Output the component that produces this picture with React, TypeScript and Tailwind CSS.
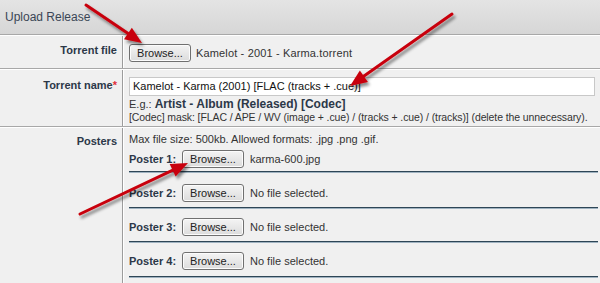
import React from 'react';

type Pt = [number, number];

// red annotation arrows drawn over the form
const arrows: { from: Pt; to: Pt }[] = [
  { from: [86, 5], to: [142, 43] },
  { from: [452, 14], to: [350, 86] },
  { from: [80, 214], to: [188, 163] },
];

function arrowHead(from: Pt, to: Pt, len = 17, half = 7) {
  const dx = to[0] - from[0];
  const dy = to[1] - from[1];
  const d = Math.hypot(dx, dy);
  const ux = dx / d;
  const uy = dy / d;
  const bx = to[0] - ux * len;
  const by = to[1] - uy * len;
  return {
    points: `${to[0]},${to[1]} ${bx - uy * half},${by + ux * half} ${bx + uy * half},${by - ux * half}`,
    base: [bx + ux * 2, by + uy * 2] as Pt,
  };
}

function Arrows() {
  return (
    <svg className="absolute inset-0 pointer-events-none" width={600} height={283}>
      <defs>
        <filter id="shadow" x="-20%" y="-20%" width="140%" height="140%">
          <feDropShadow dx="2" dy="3" stdDeviation="1.5" floodColor="#000" floodOpacity="0.45" />
        </filter>
      </defs>
      {arrows.map((a, i) => {
        const h = arrowHead(a.from, a.to);
        return (
          <g key={i} filter="url(#shadow)">
            <line x1={a.from[0]} y1={a.from[1]} x2={h.base[0]} y2={h.base[1]} stroke="#c8000a" strokeWidth={3} strokeLinecap="round" />
            <polygon points={h.points} fill="#c8000a" />
          </g>
        );
      })}
    </svg>
  );
}

function BrowseButton() {
  return (
    <button
      type="button"
      className="h-[18px] w-[62px] shrink-0 rounded-[3px] border border-[#707070] bg-gradient-to-b from-[#f4f4f4] to-[#dcdcdc] text-[11px] leading-none text-[#222] shadow-[inset_0_0_0_1px_#fcfcfc]"
    >
      Browse...
    </button>
  );
}

function Label({ children }: { children: React.ReactNode }) {
  return (
    <div className="w-[123px] shrink-0 border-r border-[#9c9c9c] pr-[5px] text-right font-bold text-[#2c3848] shadow-[1px_0_0_#ffffff]">
      {children}
    </div>
  );
}

const posters = [
  { n: 1, file: 'karma-600.jpg', pt: 'pt-[4px]', mt: 'mt-[3px]' },
  { n: 2, file: 'No file selected.', pt: 'pt-[11px]', mt: 'mt-[5px]' },
  { n: 3, file: 'No file selected.', pt: 'pt-[9px]', mt: 'mt-[5px]' },
  { n: 4, file: 'No file selected.', pt: 'pt-[9px]', mt: 'mt-[6px]' },
];

export default function App() {
  return (
    <div
      className="relative h-[283px] w-[600px] overflow-hidden bg-[#f0f0f0] text-[11px] text-[#333]"
      style={{ fontFamily: '"Liberation Sans", Arial, sans-serif' }}
    >
      {/* header */}
      <div className="flex h-[35px] items-center border-b border-[#a8a8a8] bg-gradient-to-b from-[#e4e4e4] to-[#d6d6d6] pl-[5px] text-[12px] text-[#3a4656]">
        Upload Release
      </div>
      <div className="h-px bg-white" />

      {/* torrent file */}
      <div className="flex h-[33px] border-b border-[#a8a8a8]">
        <Label>
          <div className="pt-[6px]">Torrent file</div>
        </Label>
        <div className="flex items-center gap-[5px] self-start pl-[6px] pt-[8px]">
          <BrowseButton />
          <span className="whitespace-nowrap tracking-[0.15px]">Kamelot - 2001 - Karma.torrent</span>
        </div>
      </div>
      <div className="h-px bg-white" />

      {/* torrent name */}
      <div className="flex h-[57px] border-b border-[#a8a8a8]">
        <Label>
          <div className="pt-[7px]">
            Torrent name<span className="text-[#e0303a]">*</span>
          </div>
        </Label>
        <div className="flex min-w-0 flex-1 flex-col pl-[6px] pr-[5px] pt-[7px]">
          <div className="flex h-[19px] items-center border border-[#c8c8c8] bg-white pl-[3px] text-[#111]">
            Kamelot - Karma (2001) [FLAC (tracks + .cue)]
          </div>
          <div className="mt-[2px] whitespace-nowrap leading-[13px]">
            E.g.: <b className="text-[12px] text-[#2c3848]">Artist - Album (Released) [Codec]</b>
          </div>
          <div className="whitespace-nowrap text-[10.5px] leading-[13px] tracking-[-0.1px]">
            [Codec] mask: [FLAC / APE / WV (image + .cue) / (tracks + .cue) / (tracks)] (delete the unnecessary).
          </div>
        </div>
      </div>
      <div className="h-px bg-white" />

      {/* posters */}
      <div className="flex">
        <Label>
          <div className="h-[160px] pt-[5px]">Posters</div>
        </Label>
        <div className="flex flex-1 flex-col pl-[6px] pr-[2px] pt-[5px]">
          <div className="whitespace-nowrap leading-[13px]">Max file size: 500kb. Allowed formats: .jpg .png .gif.</div>
          {posters.map((p) => (
            <div key={p.n} className={p.pt}>
              <div className="flex items-center gap-[6px]">
                <span className="w-[47px] shrink-0 whitespace-nowrap font-bold text-[#2c3848]">Poster {p.n}:</span>
                <BrowseButton />
                <span className="whitespace-nowrap">{p.file}</span>
              </div>
              <div className={`${p.mt} h-px bg-[#2e4656]`} />
              <div className="h-px bg-[#9fb2c0]" />
            </div>
          ))}
        </div>
      </div>

      <Arrows />
    </div>
  );
}
